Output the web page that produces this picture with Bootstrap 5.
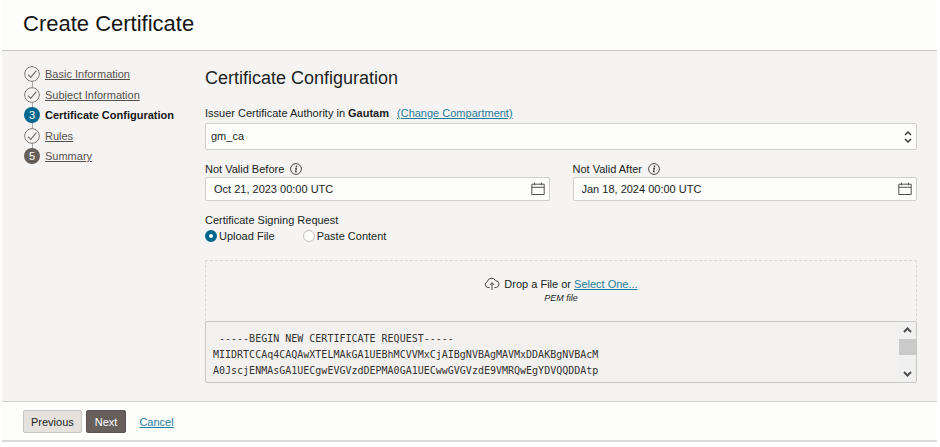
<!DOCTYPE html>
<html lang="en">
<head>
<meta charset="utf-8">
<meta name="viewport" content="width=device-width, initial-scale=1">
<title>Create Certificate</title>
<link href="https://cdn.jsdelivr.net/npm/bootstrap@5.3.0/dist/css/bootstrap.min.css" rel="stylesheet">
<style>
  body { font-family: "Liberation Sans", Arial, sans-serif; font-size: 11px; line-height: 16px; color: #201e1c; background: #fff; }
  a { color: #1f7a99; }
  .wizard { margin: 0 3px 0 2px; background: #fdfdfc; border-bottom: 2px solid #dcdbda; }
  .wizard-head { padding: 8px 21px 10px; border-bottom: 1px solid #c6c5c4; }
  .wizard-head h1 { font-size: 22px; line-height: 32px; font-weight: 400; color: #161513; }
  .wizard-body { background: #f5f4f3; padding: 15px 20px 18px 22px; border-bottom: 1px solid #cfcecd; }
  .wizard-foot { padding: 8px 21px 7px; }
  .step-nav { width: 181px; height: 98px; }
  .step-nav::before { content: ""; position: absolute; left: 8px; top: 8px; bottom: 8px; width: 1px; background: #a9a7a5; }
  .step-nav a { color: #55504d; }
  .step-nav .current { color: #161513; font-weight: 700; text-decoration: none; }
  .dot { width: 16px; height: 16px; border-radius: 50%; background: #f5f4f3; margin-right: 5px; font-weight: 400; color: #fff; position: relative; }
  .dot-now { background: #00688c; }
  .dot-todo { background: #665f5b; }
  .section-title { font-size: 18px; line-height: 24px; font-weight: 400; margin-bottom: 15px; color: #201e1c; }
  .field { border: 1px solid #d0cecc; border-radius: 2px; background: #fdfdfc; font-size: 11px; line-height: 16px; color: #201e1c; }
  .field:focus { border-color: #00688c; box-shadow: none; }
  .field-select { height: 27px; padding: 0 24px 2px 5px; appearance: none; margin-top: 2px; }
  .field-date { height: 24px; padding: 0 30px 1px 8px; }
  .field-row { margin-top: 11px; column-gap: 23px; }
  .info-icon { margin-left: 6px; }
  .over-icon { position: absolute; top: 0; bottom: 0; right: 5px; color: #3c3835; }
  .radio-dot { appearance: none; width: 12px; height: 12px; margin: 0 2px 0 0; border: 1px solid #c5c3c1; border-radius: 50%; background: #fdfdfc; }
  .radio-dot:checked { border: 4px solid #00688c; }
  .radio-set { column-gap: 28px; }
  .csr { margin-top: 11px; }
  .dropzone { margin-top: 16px; height: 61px; padding-top: 15px; border: 1px dashed #d8d6d3; border-bottom: 0; }
  .hint { font-size: 9px; line-height: 12px; font-style: italic; }
  .pem { display: block; height: 62px; padding: 9px 24px 0 7px; resize: none; overflow: hidden; white-space: pre; background: #f2f1f0; border: 1px solid #c9c7c4; border-radius: 2px; font-family: "DejaVu Sans Mono", monospace; font-size: 10px; line-height: 16px; color: #35322f; }
  .scroller { position: absolute; top: 1px; right: 1px; bottom: 1px; width: 17px; background: #f0f0f0; }
  .scroller span { height: 16px; background: #cacaca; margin-bottom: 10px; }
  .btn-wiz { font-size: 11px; line-height: 16px; border-radius: 2px; height: 23px; }
  .btn-prev { padding: 2px 7px; background: #e5e2de; border: 1px solid #c9c6c2; color: #201e1c; margin-right: 4px; }
  .btn-next { padding: 2px 8px; background: #665f5b; border: 1px solid #5b5450; color: #fff; margin-right: 13px; }
</style>
<script src="https://cdn.jsdelivr.net/npm/bootstrap@5.3.0/dist/js/bootstrap.bundle.min.js"></script>
</head>
<body>
<svg class="d-none" aria-hidden="true">
  <symbol id="tick" viewBox="0 0 16 16"><circle cx="8" cy="8" r="7.4" fill="none" stroke="#716c69"/><path d="M4 8.6 6.8 11.4 12.2 4.6" fill="none" stroke="#716c69" stroke-width="1.1"/></symbol>
  <symbol id="info" viewBox="0 0 12 12"><circle cx="6" cy="6" r="5.4" fill="none" stroke="#3c3835" stroke-width=".9"/><circle cx="6.5" cy="3.4" r=".8" fill="#3c3835"/><path d="M5 5.2h1.4L5.6 8.7h1.2" fill="none" stroke="#3c3835" stroke-width="1.1"/></symbol>
  <symbol id="calendar" viewBox="0 0 14 14"><path d="M.8 2.2h12.4v10.3H.8zM.8 5.3h12.4M3.6.7v2.6M10.4.7v2.6" fill="none" stroke="#55504d"/></symbol>
</svg>

<div class="wizard">
  <header class="wizard-head"><h1 class="m-0">Create Certificate</h1></header>

  <main class="wizard-body d-flex">
    <nav aria-label="Steps" class="flex-shrink-0">
      <ol class="step-nav list-unstyled d-flex flex-column justify-content-between position-relative m-0">
        <li><a href="#basic" class="d-flex"><svg class="dot flex-shrink-0"><use href="#tick"/></svg>Basic Information</a></li>
        <li><a href="#subject" class="d-flex"><svg class="dot flex-shrink-0"><use href="#tick"/></svg>Subject Information</a></li>
        <li><a href="#configuration" class="current d-flex" aria-current="step"><span class="dot dot-now flex-shrink-0 text-center">3</span>Certificate Configuration</a></li>
        <li><a href="#rules" class="d-flex"><svg class="dot flex-shrink-0"><use href="#tick"/></svg>Rules</a></li>
        <li><a href="#summary" class="d-flex"><span class="dot dot-todo flex-shrink-0 text-center">5</span><span>Summary</span></a></li>
      </ol>
    </nav>

    <form class="flex-grow-1">
      <h2 class="section-title">Certificate Configuration</h2>

      <div class="d-flex">
        <label for="issuer">Issuer Certificate Authority in <b>Gautam</b></label>
        <a href="#compartment" class="ms-2">(Change Compartment)</a>
      </div>
      <div class="position-relative">
        <select id="issuer" class="field field-select w-100 d-block"><option>gm_ca</option></select>
        <svg class="over-icon my-auto pe-none" width="8" height="14" viewBox="0 0 8 14"><path d="M1 5 4 2l3 3M1 9l3 3 3-3" fill="none" stroke="currentColor" stroke-width="1.5"/></svg>
      </div>

      <div class="field-row d-flex">
        <div class="flex-fill">
          <div class="d-flex align-items-center">
            <label for="before">Not Valid Before</label>
            <svg class="info-icon" width="12" height="12"><use href="#info"/></svg>
          </div>
          <div class="position-relative">
            <input id="before" type="text" class="field field-date w-100 d-block" value="Oct 21, 2023 00:00 UTC">
            <button type="button" class="over-icon btn p-0 border-0 d-flex align-items-center" aria-label="Choose start date"><svg width="14" height="14"><use href="#calendar"/></svg></button>
          </div>
        </div>
        <div class="flex-fill">
          <div class="d-flex align-items-center">
            <label for="after">Not Valid After</label>
            <svg class="info-icon" width="12" height="12"><use href="#info"/></svg>
          </div>
          <div class="position-relative">
            <input id="after" type="text" class="field field-date w-100 d-block" value="Jan 18, 2024 00:00 UTC">
            <button type="button" class="over-icon btn p-0 border-0 d-flex align-items-center" aria-label="Choose end date"><svg width="14" height="14"><use href="#calendar"/></svg></button>
          </div>
        </div>
      </div>

      <div class="csr" id="csr-label">Certificate Signing Request</div>
      <div class="radio-set d-flex" role="radiogroup" aria-labelledby="csr-label">
        <label class="d-flex align-items-center"><input type="radio" name="source" class="radio-dot" checked>Upload File</label>
        <label class="d-flex align-items-center"><input type="radio" name="source" class="radio-dot">Paste Content</label>
      </div>

      <div class="dropzone text-center">
        <div class="d-flex justify-content-center align-items-center">
          <svg class="me-1" width="16" height="14" viewBox="0 0 16 14"><path d="M5.5 10.5H4A3 3 0 0 1 3.3 4.7 4.4 4.4 0 0 1 11.5 3.6a3.5 3.5 0 0 1 .8 6.9h-1.8M8 13V6M5.8 8 8 5.7 10.2 8" fill="none" stroke="#4a4643"/></svg>
          <span>Drop a File or <a href="#select">Select One...</a></span>
        </div>
        <div class="hint">PEM file</div>
      </div>
      <div class="position-relative">
        <textarea class="pem w-100" aria-label="Certificate signing request" readonly spellcheck="false">
 -----BEGIN NEW CERTIFICATE REQUEST-----
MIIDRTCCAq4CAQAwXTELMAkGA1UEBhMCVVMxCjAIBgNVBAgMAVMxDDAKBgNVBAcM
A0JscjENMAsGA1UECgwEVGVzdDEPMA0GA1UECwwGVGVzdE9VMRQwEgYDVQQDDAtp
ZXMxDTALBgNVhBAMMBGNvckMbkdSqGSIG3wEGCSqbIG3DQhAQEFAAOCAQkAMIIBC</textarea>
        <div class="scroller d-flex flex-column align-items-center" aria-hidden="true">
          <svg width="17" height="17" viewBox="0 0 17 17"><path d="m5 10 3.5-3.5L12 10" fill="none" stroke="#4d4d4d" stroke-width="2"/></svg>
          <span class="w-100"></span>
          <svg width="17" height="17" viewBox="0 0 17 17"><path d="M5 7l3.500 3.500L12 7" fill="none" stroke="#4d4d4d" stroke-width="2"/></svg>
        </div>
      </div>
    </form>
  </main>

  <footer class="wizard-foot d-flex align-items-center">
    <button type="button" class="btn btn-wiz btn-prev">Previous</button>
    <button type="button" class="btn btn-wiz btn-next">Next</button>
    <a href="#cancel">Cancel</a>
  </footer>
</div>
</body>
</html>
